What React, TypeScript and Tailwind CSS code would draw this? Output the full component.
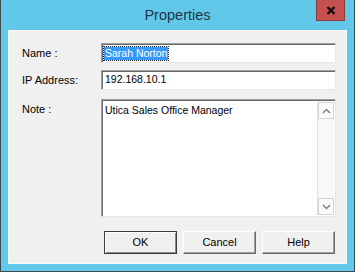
import React from "react";

const font = { fontFamily: '"Liberation Sans", Arial, sans-serif' };

function Chevron({ up }: { up?: boolean }) {
  return (
    <svg width="9" height="6" viewBox="0 0 9 6" className="block">
      <path
        d={up ? "M1 5 L4.5 1.5 L8 5" : "M1 1 L4.5 4.5 L8 1"}
        fill="none"
        stroke="#7a7a7a"
        strokeWidth="1.4"
      />
    </svg>
  );
}

function Btn({ label, def }: { label: string; def?: boolean }) {
  return (
    <div
      className={
        "w-[73px] h-[23px] flex items-center justify-center text-[11px] text-black bg-[#f0f0f0] " +
        (def
          ? "border border-[#3c3c3c] shadow-[inset_1px_1px_0_#ffffff,inset_-1px_-1px_0_#8a8a8a]"
          : "border border-t-white border-l-white border-b-[#6a6a6a] border-r-[#6a6a6a] shadow-[inset_-1px_-1px_0_#a0a0a0]")
      }
    >
      {label}
    </div>
  );
}

export default function App() {
  return (
    <div
      className="w-[355px] h-[272px] bg-[#62c8ea] border-x border-b border-[#3d4a52] flex flex-col"
      style={font}
    >
      <div className="relative h-[30px] shrink-0 flex items-center justify-center">
        <span className="text-[14.5px] text-[#1f3544] leading-none pt-[1px]">Properties</span>
        <div className="absolute top-0 right-[9px] w-[29px] h-[21px] bg-[#c75050] border border-[#8f3a3a] border-t-0 flex items-center justify-center">
          <svg width="10" height="9" viewBox="0 0 10 9" className="block">
            <path d="M1.5 1 L8.5 8 M8.5 1 L1.5 8" stroke="#111" strokeWidth="2.4" />
          </svg>
        </div>
      </div>
      <div className="mx-[7px] mb-[7px] flex-1 bg-[#f0f0f0] border border-[#f8f8f8] pl-[13px] pr-[10px] pt-[12px] flex flex-col">
        <div className="flex items-center h-[20px]">
          <div className="w-[79px] text-[11px] text-black">Name :</div>
          <div className="flex-1 h-[20px] bg-white border border-[#a0a0a0] border-b-[#e8e8e8] border-r-[#e8e8e8] shadow-[inset_1px_1px_0_#696969] flex items-center pl-[2px]">
            <span className="bg-[#3399ff] text-white text-[10.5px] leading-[13px] px-[1px] outline outline-1 outline-dotted outline-[#1a1a1a]">
              Sarah Norton
            </span>
          </div>
        </div>
        <div className="flex items-center h-[20px] mt-[7px]">
          <div className="w-[79px] text-[11px] text-black">IP Address:</div>
          <div className="flex-1 h-[20px] bg-white border border-[#a0a0a0] border-b-[#e8e8e8] border-r-[#e8e8e8] shadow-[inset_1px_1px_0_#696969] flex items-center pl-[3px] text-[10.5px] text-black">
            192.168.10.1
          </div>
        </div>
        <div className="flex mt-[9px] h-[118px]">
          <div className="w-[79px] text-[11px] text-black pt-[2px]">Note :</div>
          <div className="flex-1 bg-white border border-[#a0a0a0] border-b-[#e8e8e8] border-r-[#e8e8e8] shadow-[inset_1px_1px_0_#696969] flex pl-[3px] pt-[2px] pb-[1px] pr-[1px]">
            <div className="flex-1 text-[10.5px] text-black pt-[1px]">Utica Sales Office Manager</div>
            <div className="w-[17px] flex flex-col bg-[#f8f8f8] border-l border-[#e0e0e0]">
              <div className="h-[17px] border border-[#d4d4d4] bg-[#fafafa] flex items-center justify-center">
                <Chevron up />
              </div>
              <div className="flex-1" />
              <div className="h-[17px] border border-[#d4d4d4] bg-[#fafafa] flex items-center justify-center">
                <Chevron />
              </div>
            </div>
          </div>
        </div>
        <div className="flex justify-end gap-[6px] mt-[14px] pr-[1px]">
          <Btn label="OK" def />
          <Btn label="Cancel" />
          <Btn label="Help" />
        </div>
      </div>
    </div>
  );
}
